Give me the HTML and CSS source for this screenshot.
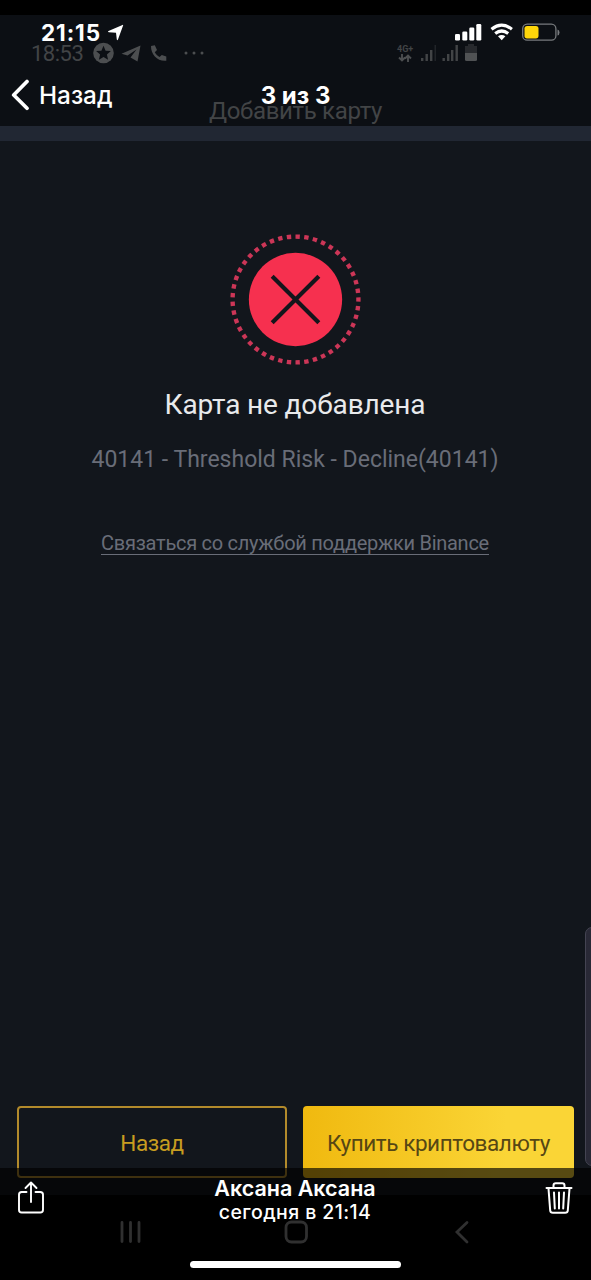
FILE: index.html
```html
<!DOCTYPE html>
<html lang="ru">
<head>
<meta charset="utf-8">
<title>3 из 3</title>
<link rel="stylesheet" href="styles.css">
</head>
<body>
<div class="viewer">
  <main class="photo">
    <header class="photo-head">
      <div class="droid-status">
        <span class="droid-time">18:53</span>
        <svg class="droid-left" width="112" height="22" viewBox="0 0 112 22" fill="#4c4e50">
          <circle cx="10.500" cy="11" r="10.300"/>
          <path fill="#0c0f14" d="M10.500 3.800l2.100 4.900 5.300.4-4 3.500 1.200 5.200-4.600-2.800-4.600 2.800 1.200-5.200-4-3.500 5.300-.4z"/>
          <path d="M28.500 11.800L47.500 3.500 44.500 19.500 37.500 15.500 43.500 7.500 34.500 13.500z"/>
          <path d="M58 4l3.800-.7 2.200 4.700-2.200 2.300c1.200 2.200 2.700 3.600 4.700 4.700l2.300-2.100 4.500 1.700v4.100c-8.500 1-15.500-6-15.300-14.700z"/>
          <circle cx="93" cy="11" r="1.500"/><circle cx="101" cy="11" r="1.500"/><circle cx="109" cy="11" r="1.500"/>
        </svg>
        <div class="net"><span>4G+</span>
          <svg width="14" height="8" viewBox="0 0 14 8" fill="none" stroke="#4c4e50" stroke-width="1.900"><path d="M4 0v6.500M1 3.500l3 3 3-3M10 8V1.500M7 4.500l3-3 3 3"/></svg>
        </div>
        <svg class="droid-right" width="58" height="20" viewBox="0 0 58 20" fill="#424446">
          <path d="M0 15h2.400v3H0zM4.500 11h2.400v7H4.500zM9 7h2.400v11H9z"/><path opacity=".4" d="M13.500 2h1.500v16h-1.500z"/>
          <path d="M21.500 15h2.400v3h-2.400zM26 11h2.400v7H26zM30 7h2.400v11H30zM34.500 2h2.400v16h-2.400z"/>
          <path opacity=".5" d="M47 1h6v2h3v7H44V3h3z"/><path fill="#505254" d="M44 10h12v6.500q0 1.500-1.500 1.500h-9q-1.500 0-1.500-1.500z"/>
        </svg>
      </div>
      <h1 class="photo-title">Добавить карту</h1>
    </header>
    <div class="strip"></div>
    <section class="result">
      <svg class="fail" width="131" height="131" viewBox="0 0 132 132" fill="none">
        <circle cx="66" cy="66" r="63.400" stroke="#cc3657" stroke-width="4.400" stroke-dasharray="1 1" stroke-dashoffset=".5" pathLength="90"/>
        <circle cx="66" cy="66" r="47" fill="#f6304f"/>
        <path d="M42.500 42.500l47 47M89.500 42.500l-47 47" stroke="#14151b" stroke-width="4.200"/>
      </svg>
      <h2 class="result-title">Карта не добавлена</h2>
      <p class="reason">40141 - Threshold Risk - Decline(40141)</p>
      <a class="support">Связаться со службой поддержки Binance</a>
    </section>
    <div class="actions">
      <button class="btn btn-back">Назад</button>
      <button class="btn btn-buy">Купить криптовалюту</button>
    </div>
    <div class="edge-panel"></div>
    <nav class="droid-nav">
      <svg width="360" height="24" viewBox="0 0 360 24" fill="none" stroke="#89898b" stroke-width="2.800" stroke-linecap="round">
        <path d="M6 2.500v19M14.500 2.500v19M23 2.500v19"/>
        <rect x="170" y="2" width="20.500" height="20" rx="5.500"/>
        <path d="M351 2.500L341 12l10 10"/>
      </svg>
    </nav>
  </main>

  <header class="top-bar">
    <div class="ios-status">
      <span class="ios-time">21:15</span>
      <svg class="loc" width="17" height="17" viewBox="0 0 17 17" fill="#fff"><path d="M15.500.9q.9-.4.600.6L11 15.600q-.8 1.400-1.200-.1L9 8.700 1.800 8.200Q.2 7.600 1.500 6.900z"/></svg>
      <svg class="ios-icons" width="106" height="20" viewBox="0 0 106 20" fill="#fff">
        <rect x="0" y="11" width="5" height="6.500" rx="1.300"/><rect x="7.300" y="8.500" width="5" height="9" rx="1.300"/><rect x="14.300" y="4.500" width="5" height="13" rx="1.300"/><rect x="21.300" y="1" width="5" height="16.500" rx="1.300"/>
        <g fill="none" stroke="#fff" stroke-width="3.200"><path d="M36.500 6.200q10.200-8 20.400 0M40.200 10.500q6.500-5 13 0"/></g>
        <path d="M43 13.300q3.700-2.700 7.400 0L46.700 17.300z"/>
        <rect x="67.700" y="1.200" width="33.200" height="16" rx="4.500" fill="none" stroke="#777a7d" stroke-width="1.300"/>
        <rect x="69.500" y="3" width="14" height="12.400" rx="2.600" fill="#ffd60a"/>
        <path fill="#777a7d" d="M102.500 6.500q2 .5 2 3t-2 3z"/>
      </svg>
    </div>
    <div class="nav-row">
      <div class="back"><svg width="20" height="32" viewBox="0 0 20 32" fill="none" stroke="#fff" stroke-width="3.700" stroke-linecap="round" stroke-linejoin="round"><path d="M17 2.500L3.700 16 17 29.300"/></svg><span>Назад</span></div>
      <strong class="counter">3 из 3</strong>
    </div>
  </header>

  <footer class="bottom-bar">
    <div class="toolbar">
      <svg width="28" height="34" viewBox="0 0 28 34" fill="none" stroke="#fff" stroke-width="1.900" stroke-linecap="round" stroke-linejoin="round"><path d="M9.500 12H4.700Q2 12 2 14.700v15Q2 32.500 4.700 32.500h18.500q2.800 0 2.800-2.800v-15Q26 12 23.200 12h-4.700M14 22V2.500M8.500 8L14 2.500 19.500 8"/></svg>
      <div class="caption"><strong>Аксана Аксана</strong><span>сегодня в 21:14</span></div>
      <svg width="28" height="34" viewBox="0 0 28 34" fill="none" stroke="#fff" stroke-width="2" stroke-linecap="round" stroke-linejoin="round"><path d="M1.500 8h25M8.500 7.500V5.500Q8.500 3.200 10.800 3.200h6.400q2.300 0 2.300 2.300v2M3.500 8.500l1.700 22q.2 2.300 2.700 2.300h12.200q2.500 0 2.700-2.300L24.500 8.500M9 12.500l.8 16M14 12.500v16M19 12.500l-.8 16"/></svg>
    </div>
    <div class="home"></div>
  </footer>
</div>
</body>
</html>
```
FILE: styles.css
```css
* { box-sizing: border-box; }
body { margin: 0; background: #000; }
h1, h2, p { margin: 0; font-weight: 400; }
svg { display: block; flex: none; }

.viewer {
  position: relative;
  width: 591px;
  height: 1280px;
  padding-top: 15px;
  overflow: hidden;
  background: #000;
  font-family: Inter, sans-serif;
  color: #fff;
}

.photo {
  position: relative;
  display: flex;
  flex-direction: column;
  height: 1265px;
  background: #12161c;
  font-family: Roboto, sans-serif;
  white-space: nowrap;
}
.photo-head { height: 111px; background: #0c0f14; color: #424446; }
.droid-status { display: flex; align-items: center; height: 48px; padding: 28px 0 0 31px; }
.droid-time { width: 62px; padding-top: 2px; font-size: 22px; letter-spacing: -0.5px; line-height: 24px; }
.net { margin-left: 192px; width: 24px; font-size: 9px; font-weight: 700; line-height: 9px; }
.net svg { margin-left: 1px; }
.photo-title { padding-top: 33px; font-size: 24px; line-height: 30px; letter-spacing: -0.33px; text-align: center; }
.strip { height: 15px; background: #212733; }

.result { display: flex; flex-direction: column; align-items: center; flex: 1; padding: 93px 1px 0 0; }
.result-title { margin-top: 22px; font-size: 28px; line-height: 36px; letter-spacing: -0.13px; color: #e9eaec; }
.reason { margin-top: 22px; font-size: 23px; line-height: 30px; color: #696d78; }
.support { margin-top: 57px; font-size: 20px; line-height: 22px; letter-spacing: -0.27px; color: #696d78; border-bottom: 1.5px solid #696d78; }

.actions { display: grid; grid-template-columns: 270px 271px; gap: 16px; padding: 0 17px; height: 72px; }
.btn { padding: 1px 0 0; border: 0; border-radius: 4px; font-family: inherit; font-size: 22.5px; letter-spacing: -0.43px; }
.btn-back { border: 2px solid #b28a2b; background: transparent; color: #c79d20; }
.btn-buy { background: linear-gradient(90deg, #f0b90f, #fad536 75%); color: #564714; }

.edge-panel {
  position: absolute;
  right: -8px;
  top: 912px;
  width: 14px;
  height: 239px;
  border: 1px solid #444452;
  border-radius: 8px;
  background: #292936;
}
.droid-nav { display: flex; justify-content: center; height: 85px; margin-top: 17px; padding: 25px 0 0; background: #000; }

.top-bar { position: absolute; inset: 0 0 auto; height: 126px; }
.ios-status { display: flex; align-items: center; height: 50px; padding: 15px 0 0 41px; }
.ios-time { width: 66px; font-size: 22.5px; font-weight: 700; line-height: 34px; letter-spacing: 0.9px; }
.loc { margin-top: -1px; }
.ios-icons { margin-left: 331px; }
.nav-row { display: grid; grid-template-columns: 1fr auto 1fr; align-items: center; height: 90px; padding-left: 10px; }
.back { display: flex; align-items: center; gap: 9px; font-size: 24.3px; font-weight: 500; }
.counter { padding-right: 10px; font-size: 24px; font-weight: 700; }

.bottom-bar { position: absolute; inset: auto 0 0; height: 112px; background: rgba(0, 0, 0, 0.65); }
.toolbar { display: flex; justify-content: space-between; padding: 12px 18px 0 17px; height: 96px; }
.caption { display: flex; flex-direction: column; align-items: center; margin-top: -4px; }
.caption strong { font-size: 21.5px; line-height: 25px; font-weight: 600; }
.caption span { font-size: 19.5px; line-height: 22px; font-weight: 500; letter-spacing: 0.4px; }
.home { width: 211px; height: 7px; margin: -3px auto 0; border-radius: 4px; background: #fff; }
```
